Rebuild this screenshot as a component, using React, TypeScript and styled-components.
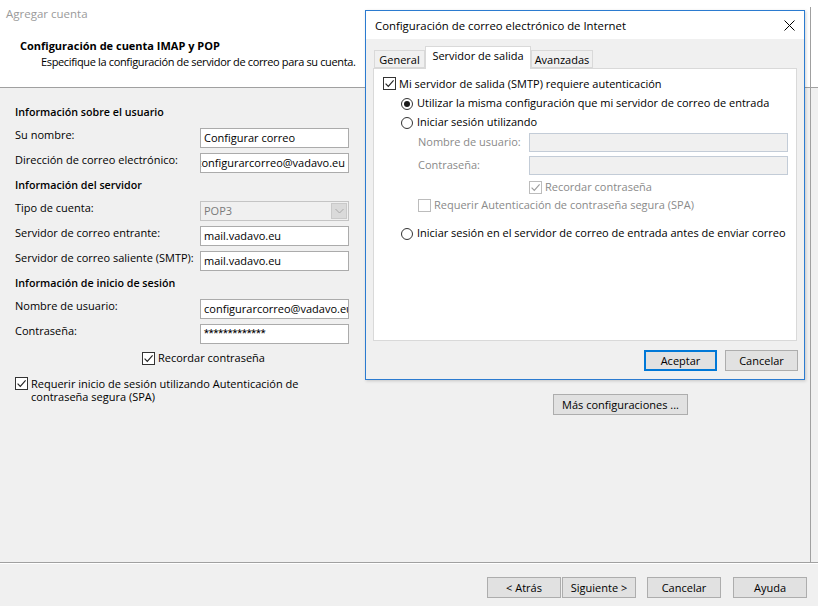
import React from 'react';
import styled, { createGlobalStyle } from 'styled-components';

const GlobalStyle = createGlobalStyle`
  html, body, #root {
    height: 100%;
  }
  body {
    margin: 0;
    overflow: hidden;
    background: #f0f0f0;
    color: #000;
    font-family: 'Open Sans', Roboto, 'Liberation Sans', Arial, sans-serif;
    font-size: 11px;
  }
`;

const EDGE = 'linear-gradient(#a0a0a0, #a0a0a0)';

const Window = styled.div`
  position: relative;
  height: 100%;
  display: flex;
  flex-direction: column;
`;

const Header = styled.header`
  height: 88px;
  box-sizing: border-box;
  padding: 7px 0 0 6px;
  border-bottom: 1px solid #a0a0a0;
  background: ${EDGE} 810px 7px / 1px 100% no-repeat, #fff;
  line-height: 14px;
`;

const WindowTitle = styled.div`
  color: #9a9a9a;
  font-size: 11.5px;
`;

const HeaderHeading = styled.div`
  margin-top: 18px;
  padding-left: 14px;
  font-weight: 700;
`;

const HeaderSub = styled.div`
  margin-top: 2px;
  padding-left: 35px;
  letter-spacing: -0.35px;
`;

const Body = styled.main`
  flex: 1;
  display: flex;
  background: ${EDGE} 810px 0 / 1px 100% no-repeat, #f0f0f0;
`;

const Form = styled.section`
  width: 334px;
  margin-left: 15px;
  padding-top: 16.5px;
  display: flex;
  flex-direction: column;
`;

const SectionTitle = styled.div`
  margin-bottom: 9px;
  line-height: 14px;
  font-size: 10.7px;
  font-weight: 600;
`;

const FieldRow = styled.div`
  display: grid;
  grid-template-columns: 185px 149px;
  height: 20px;
  margin-bottom: 5px;
`;

const FieldLabel = styled.span`
  line-height: 14px;
  white-space: nowrap;
`;

const TextBox = styled.div<{ $end?: boolean; $mask?: boolean }>`
  height: 20px;
  box-sizing: border-box;
  border: 1px solid #ababab;
  background: #fff;
  padding: 0 3px;
  display: flex;
  align-items: center;
  justify-content: ${p => (p.$end ? 'flex-end' : 'flex-start')};
  overflow: hidden;
  white-space: nowrap;
  line-height: 18px;
  font-family: ${p => (p.$mask ? "Roboto, 'Liberation Sans', sans-serif" : 'inherit')};
`;

const SelectBox = styled.div`
  height: 20px;
  box-sizing: border-box;
  border: 1px solid #c4c4c4;
  background: #f0f0f0;
  color: #7a7a7a;
  padding: 0 1px 0 3px;
  display: flex;
  align-items: center;
  justify-content: space-between;
  line-height: 18px;
`;

const DropButton = styled.span`
  width: 16px;
  height: 16px;
  box-sizing: border-box;
  border: 1px solid #c9c9c9;
  background: #dadada;
  display: flex;
  align-items: center;
  justify-content: center;
  color: #a8a8a8;
`;

const CheckRow = styled.div<{ $indent: number; $top: number }>`
  display: flex;
  align-items: flex-start;
  padding-left: ${p => p.$indent}px;
  margin-top: ${p => p.$top}px;
  line-height: 14px;
`;

const CheckBox = styled.span<{ $disabled?: boolean; $shift?: number }>`
  width: 13px;
  height: 13px;
  box-sizing: border-box;
  flex-shrink: 0;
  margin-top: ${p => p.$shift ?? 1}px;
  margin-right: 3px;
  border: 1px solid ${p => (p.$disabled ? '#bcbcbc' : '#333')};
  background: #fff;
  color: ${p => (p.$disabled ? '#9d9d9d' : '#222')};
  display: flex;
  align-items: center;
  justify-content: center;
`;

const Radio = styled.span<{ $checked?: boolean }>`
  width: 12px;
  height: 12px;
  box-sizing: border-box;
  flex-shrink: 0;
  margin-top: 2px;
  margin-right: 4px;
  border: 1px solid #333;
  border-radius: 50%;
  background: #fff;
  display: flex;
  align-items: center;
  justify-content: center;

  &::after {
    content: '';
    width: 6px;
    height: 6px;
    border-radius: 50%;
    background: ${p => (p.$checked ? '#1a1a1a' : 'transparent')};
  }
`;

const CheckText = styled.span<{ $disabled?: boolean }>`
  color: ${p => (p.$disabled ? '#8a8a8a' : '#000')};
  white-space: nowrap;
`;

const TextLine = styled.span`
  display: block;
  height: 13px;
  line-height: 13px;
`;

const RightPane = styled.div`
  margin-left: 204px;
  padding-top: 306px;
`;

const Button = styled.button<{ $width: number; $gap?: number; $default?: boolean }>`
  width: ${p => p.$width}px;
  height: 21px;
  margin-left: ${p => p.$gap ?? 0}px;
  box-sizing: border-box;
  padding: 0;
  border: ${p => (p.$default ? '2px solid #0078d7' : '1px solid #adadad')};
  background: #e1e1e1;
  color: #000;
  font: inherit;
  line-height: 17px;
  white-space: nowrap;
  flex-shrink: 0;
`;

const Footer = styled.footer`
  height: 44px;
  box-sizing: border-box;
  border-top: 1px solid #a0a0a0;
  box-shadow: inset 0 1px 0 #fff;
  display: flex;
  justify-content: flex-end;
  align-items: flex-start;
  padding: 14px 11px 0 0;
`;

/* dialog window on top of the wizard */

const Dialog = styled.div`
  position: absolute;
  left: 365px;
  top: 10px;
  width: 440px;
  height: 370px;
  box-sizing: border-box;
  border: 1px solid #2b7bd0;
  background: #f0f0f0;
  box-shadow: 1px 1px 3px rgba(0, 0, 0, 0.18);
  display: flex;
  flex-direction: column;
`;

const DialogTitleBar = styled.div`
  height: 28px;
  flex-shrink: 0;
  background: #fff;
  display: flex;
  align-items: center;
  justify-content: space-between;
  padding: 0 9px;
  font-size: 11.35px;
`;

const DialogBody = styled.div`
  flex: 1;
  padding: 7px 7px 0;
  display: flex;
  flex-direction: column;
`;

const TabStrip = styled.div`
  height: 22px;
  display: flex;
  align-items: flex-end;
  padding-left: 1px;
`;

const Tab = styled.div<{ $width: number; $active?: boolean }>`
  position: relative;
  z-index: ${p => (p.$active ? 1 : 0)};
  width: ${p => p.$width}px;
  height: ${p => (p.$active ? 23 : 18)}px;
  margin-bottom: ${p => (p.$active ? -1 : 0)}px;
  box-sizing: border-box;
  border: 1px solid #d9d9d9;
  border-bottom: ${p => (p.$active ? 'none' : '1px solid #d9d9d9')};
  background: ${p => (p.$active ? '#fff' : '#f0f0f0')};
  display: flex;
  justify-content: center;
  padding-top: 2px;
  line-height: 14px;
  white-space: nowrap;
`;

const TabPanel = styled.div`
  height: 273px;
  box-sizing: border-box;
  border: 1px solid #d9d9d9;
  background: #fff;
  padding: 7px 0 0 9px;
  display: flex;
  flex-direction: column;
`;

const PanelField = styled.div<{ $top: number }>`
  display: grid;
  grid-template-columns: 111px 259px;
  padding-left: 35px;
  margin-top: ${p => p.$top}px;
  height: 19px;
`;

const PanelLabel = styled.span`
  color: #8a8a8a;
  line-height: 14px;
  padding-top: 2px;
`;

const DisabledBox = styled.div`
  height: 19px;
  box-sizing: border-box;
  border: 1px solid #c3ccd7;
  background: #f0f0f0;
`;

const DialogButtons = styled.div`
  display: flex;
  justify-content: flex-end;
  gap: 8px;
  margin: 9px -1px 0 0;
`;

const CheckMark = () => (
  <svg width="11" height="11" viewBox="0 0 11 11">
    <path d="M1.6 5.6 L4.3 8.4 L9.6 2.4" fill="none" stroke="currentColor" strokeWidth="1.15" />
  </svg>
);

const Chevron = () => (
  <svg width="9" height="6" viewBox="0 0 9 6">
    <path d="M0.5 1 L4.5 5 L8.5 1" fill="none" stroke="currentColor" strokeWidth="1" />
  </svg>
);

const CloseIcon = () => (
  <svg width="11" height="11" viewBox="0 0 11 11">
    <path d="M0.5 0.5 L10.5 10.5 M10.5 0.5 L0.5 10.5" fill="none" stroke="#000" strokeWidth="1" />
  </svg>
);

const App: React.FC = () => {
  return (
    <>
      <GlobalStyle />
      <Window>
        <Header>
          <WindowTitle>Agregar cuenta</WindowTitle>
          <HeaderHeading>Configuración de cuenta IMAP y POP</HeaderHeading>
          <HeaderSub>Especifique la configuración de servidor de correo para su cuenta.</HeaderSub>
        </Header>

        <Body>
          <Form>
            <SectionTitle>Información sobre el usuario</SectionTitle>
            <FieldRow>
              <FieldLabel>Su nombre:</FieldLabel>
              <TextBox>Configurar correo</TextBox>
            </FieldRow>
            <FieldRow>
              <FieldLabel>Dirección de correo electrónico:</FieldLabel>
              <TextBox $end>configurarcorreo@vadavo.eu</TextBox>
            </FieldRow>

            <SectionTitle>Información del servidor</SectionTitle>
            <FieldRow>
              <FieldLabel>Tipo de cuenta:</FieldLabel>
              <SelectBox>
                POP3
                <DropButton>
                  <Chevron />
                </DropButton>
              </SelectBox>
            </FieldRow>
            <FieldRow>
              <FieldLabel>Servidor de correo entrante:</FieldLabel>
              <TextBox>mail.vadavo.eu</TextBox>
            </FieldRow>
            <FieldRow>
              <FieldLabel>Servidor de correo saliente (SMTP):</FieldLabel>
              <TextBox>mail.vadavo.eu</TextBox>
            </FieldRow>

            <SectionTitle>Información de inicio de sesión</SectionTitle>
            <FieldRow>
              <FieldLabel>Nombre de usuario:</FieldLabel>
              <TextBox>configurarcorreo@vadavo.eu</TextBox>
            </FieldRow>
            <FieldRow>
              <FieldLabel>Contraseña:</FieldLabel>
              <TextBox $mask>*************</TextBox>
            </FieldRow>

            <CheckRow $indent={127} $top={2}>
              <CheckBox $shift={1.5}>
                <CheckMark />
              </CheckBox>
              <CheckText>Recordar contraseña</CheckText>
            </CheckRow>
            <CheckRow $indent={0} $top={11.5}>
              <CheckBox $shift={0.5}>
                <CheckMark />
              </CheckBox>
              <CheckText>
                <TextLine>Requerir inicio de sesión utilizando Autenticación de</TextLine>
                <TextLine>contraseña segura (SPA)</TextLine>
              </CheckText>
            </CheckRow>
          </Form>

          <RightPane>
            <Button $width={135}>Más configuraciones ...</Button>
          </RightPane>
        </Body>

        <Footer>
          <Button $width={74}>&lt; Atrás</Button>
          <Button $width={74} $gap={1}>
            Siguiente &gt;
          </Button>
          <Button $width={74} $gap={11}>
            Cancelar
          </Button>
          <Button $width={74} $gap={12}>
            Ayuda
          </Button>
        </Footer>

        <Dialog>
          <DialogTitleBar>
            <span>Configuración de correo electrónico de Internet</span>
            <CloseIcon />
          </DialogTitleBar>
          <DialogBody>
            <TabStrip>
              <Tab $width={51}>General</Tab>
              <Tab $width={106} $active>
                Servidor de salida
              </Tab>
              <Tab $width={62}>Avanzadas</Tab>
            </TabStrip>
            <TabPanel>
              <CheckRow $indent={0} $top={1}>
                <CheckBox $shift={-0.5}>
                  <CheckMark />
                </CheckBox>
                <CheckText>Mi servidor de salida (SMTP) requiere autenticación</CheckText>
              </CheckRow>
              <CheckRow $indent={18} $top={5}>
                <Radio $checked />
                <CheckText>Utilizar la misma configuración que mi servidor de correo de entrada</CheckText>
              </CheckRow>
              <CheckRow $indent={18} $top={5}>
                <Radio />
                <CheckText>Iniciar sesión utilizando</CheckText>
              </CheckRow>
              <PanelField $top={4}>
                <PanelLabel>Nombre de usuario:</PanelLabel>
                <DisabledBox />
              </PanelField>
              <PanelField $top={4}>
                <PanelLabel>Contraseña:</PanelLabel>
                <DisabledBox />
              </PanelField>
              <CheckRow $indent={146} $top={5}>
                <CheckBox $disabled>
                  <CheckMark />
                </CheckBox>
                <CheckText $disabled>Recordar contraseña</CheckText>
              </CheckRow>
              <CheckRow $indent={35} $top={4}>
                <CheckBox $disabled />
                <CheckText $disabled>Requerir Autenticación de contraseña segura (SPA)</CheckText>
              </CheckRow>
              <CheckRow $indent={18} $top={14}>
                <Radio />
                <CheckText>Iniciar sesión en el servidor de correo de entrada antes de enviar correo</CheckText>
              </CheckRow>
            </TabPanel>
            <DialogButtons>
              <Button $width={73} $default>
                Aceptar
              </Button>
              <Button $width={73}>Cancelar</Button>
            </DialogButtons>
          </DialogBody>
        </Dialog>
      </Window>
    </>
  );
};

export default App;
